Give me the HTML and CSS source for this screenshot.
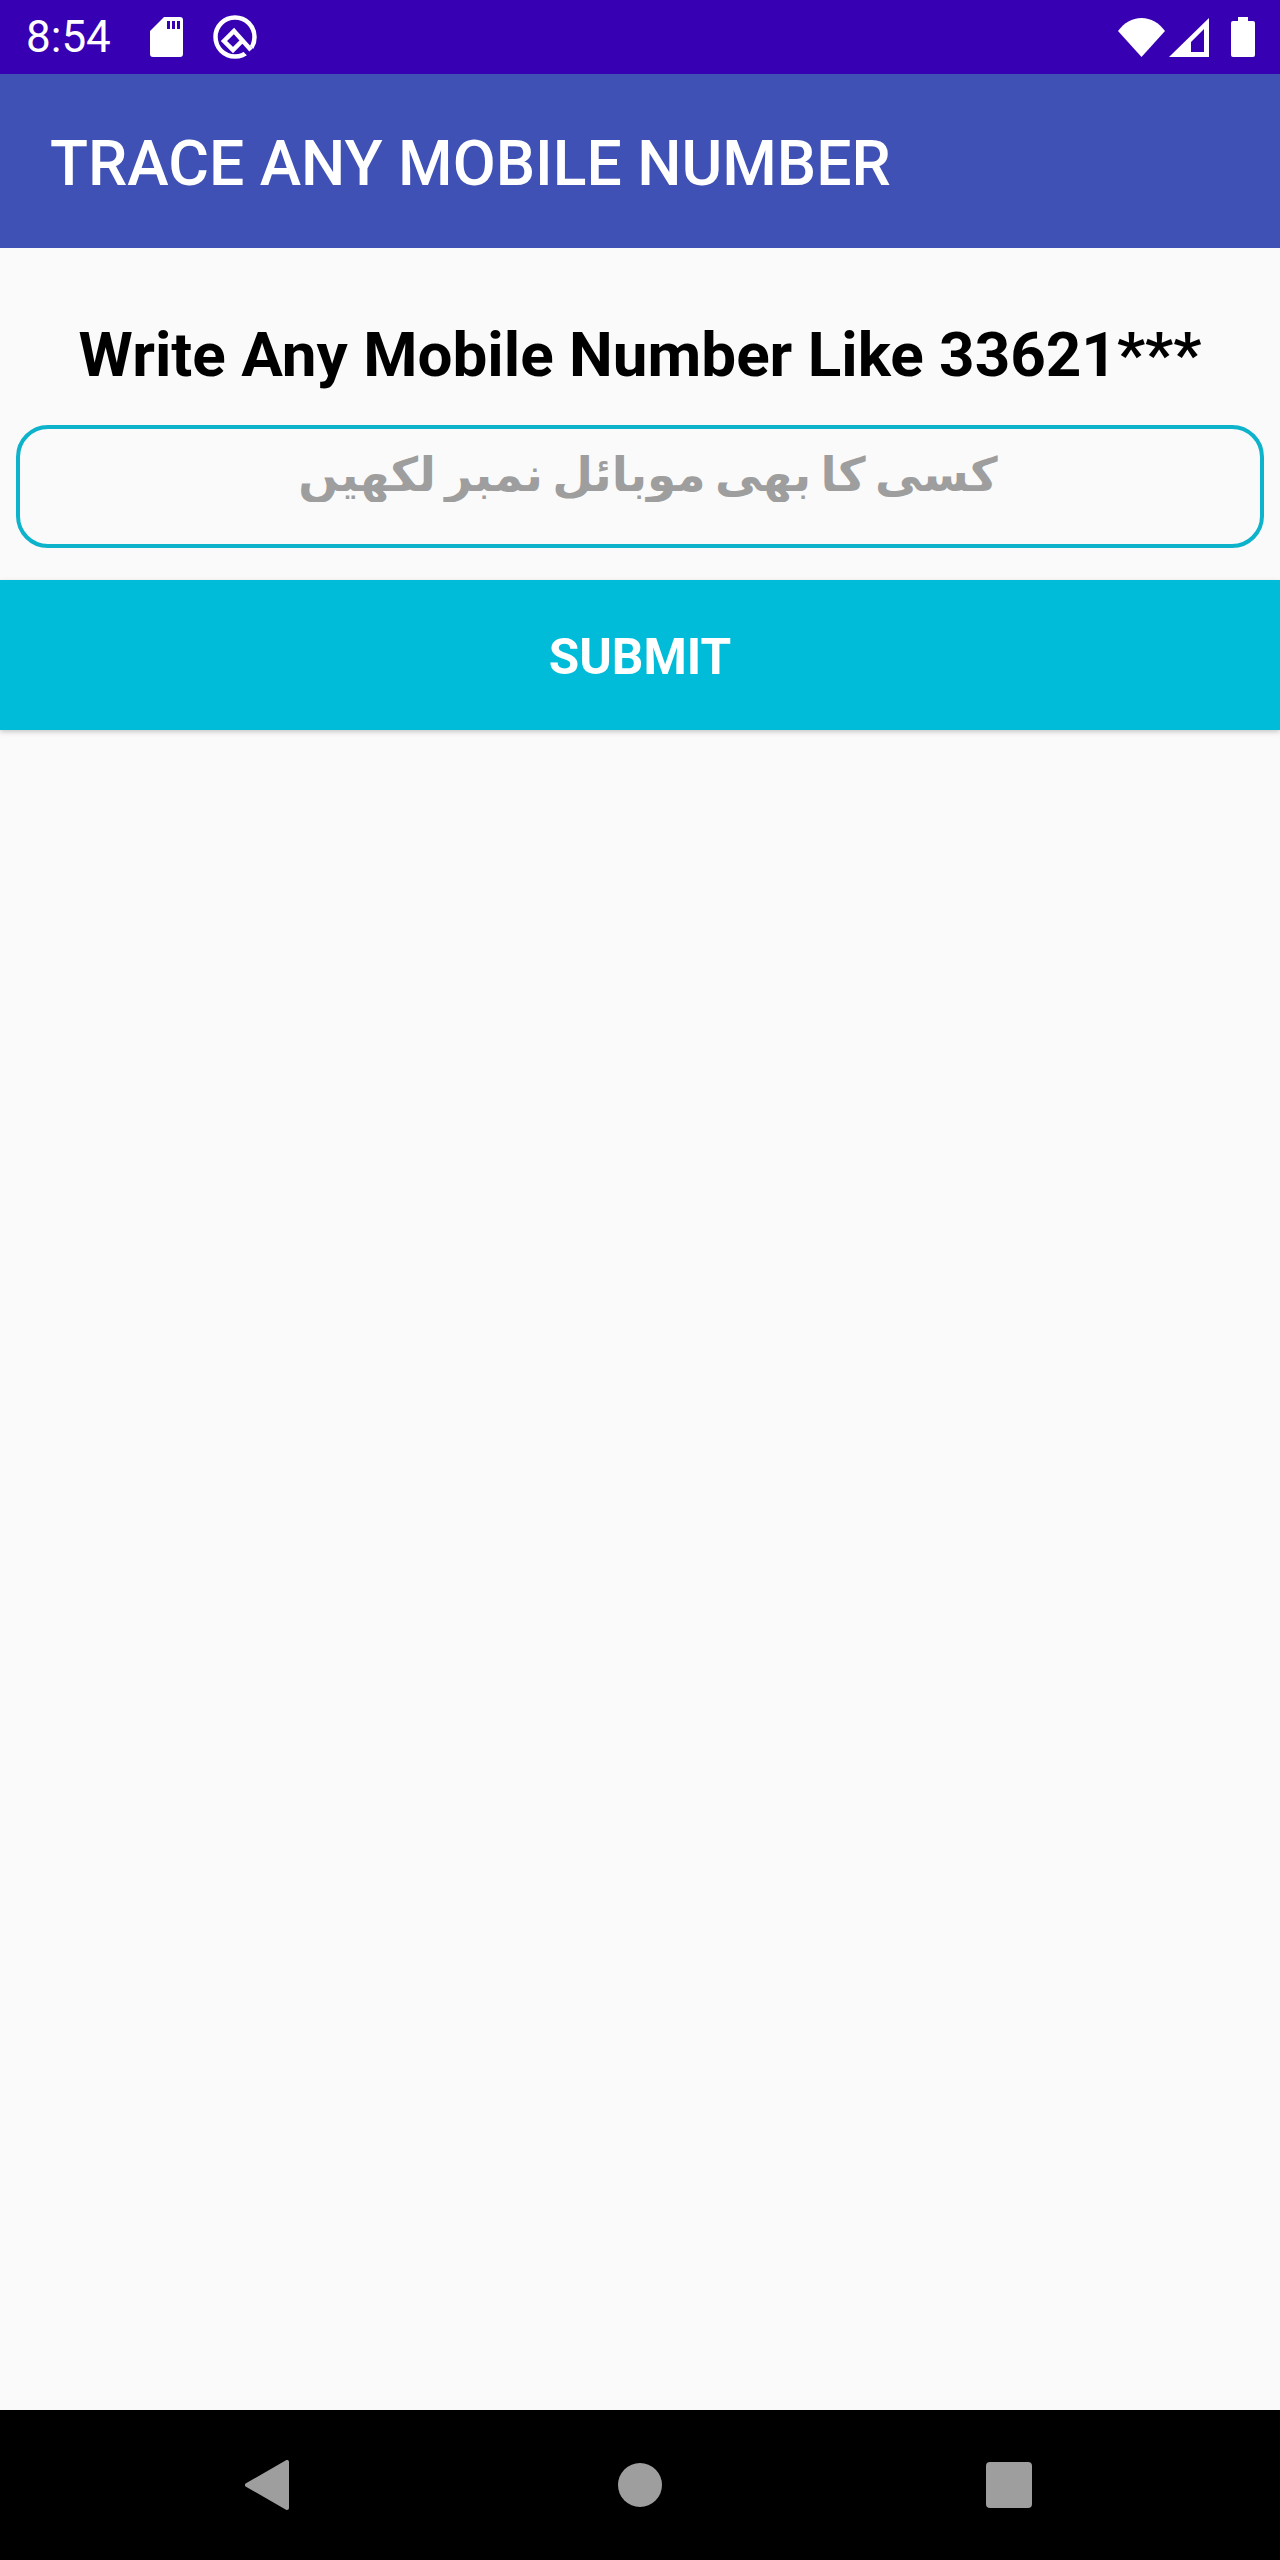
FILE: index.html
```html
<!DOCTYPE html>
<html lang="en">
<head>
    <meta charset="UTF-8">
    <meta name="viewport" content="width=device-width, initial-scale=1.0">
    <title>Trace Any Mobile Number</title>
    <link rel="stylesheet" href="styles.css">
</head>
<body>
    <div class="status-bar">
        <span class="status-time">8:54</span>
        <svg class="icon-sd" width="33" height="40" viewBox="0 0 33 40">
            <path fill-rule="evenodd" fill="#fff" d="M14 0H30a3 3 0 0 1 3 3V37a3 3 0 0 1-3 3H3a3 3 0 0 1-3-3V14ZM17 4V12H20V4ZM22 4V12H25V4ZM27 4V12H30V4Z"/>
        </svg>
        <svg class="icon-q" width="44" height="44" viewBox="0 0 44 44">
            <circle cx="22" cy="22" r="19.5" fill="none" stroke="#fff" stroke-width="4.5"/>
            <path fill="none" stroke="#3700b3" stroke-width="9" d="M31 31L40 40"/>
            <path fill="none" stroke="#fff" stroke-width="4.5" d="M38 35L21 16L11 26L20 35L29 26"/>
        </svg>
        <div class="status-right">
            <svg width="47" height="39" viewBox="0 0 47 39">
                <path fill="#fff" d="M0 13C6 5 14 0 23.5 0S41 5 47 13L23.5 39Z"/>
            </svg>
            <svg class="icon-signal" width="40" height="39" viewBox="0 0 40 39">
                <path fill-rule="evenodd" fill="#fff" d="M40 0V39H0ZM35 11L22 24V34H35Z"/>
            </svg>
            <svg class="icon-battery" width="24" height="40" viewBox="0 0 24 40">
                <path fill="#fff" d="M7 0H17V4H22a2 2 0 0 1 2 2V38a2 2 0 0 1-2 2H2a2 2 0 0 1-2-2V6a2 2 0 0 1 2-2H7Z"/>
            </svg>
        </div>
    </div>

    <div class="app-bar">TRACE ANY MOBILE NUMBER</div>

    <div class="content">
        <h1>Write Any Mobile Number Like 33621***</h1>
        <input class="number-input" type="text" placeholder="کسی کا بھی موبائل نمبر لکھیں" dir="rtl">
        <button class="submit-btn" type="button">SUBMIT</button>
    </div>

    <div class="nav-bar">
        <svg width="44" height="50" viewBox="0 0 44 50">
            <path fill="#9e9e9e" stroke="#9e9e9e" stroke-width="4" stroke-linejoin="round" d="M42 2V48L2 25Z"/>
        </svg>
        <svg class="nav-home" width="44" height="44" viewBox="0 0 44 44">
            <circle cx="22" cy="22" r="22" fill="#9e9e9e"/>
        </svg>
        <svg width="46" height="46" viewBox="0 0 46 46">
            <rect width="46" height="46" rx="4" fill="#9e9e9e"/>
        </svg>
    </div>
</body>
</html>
```

FILE: styles.css
```css
html, body {
    height: 100%;
}
body {
    margin: 0;
    display: flex;
    flex-direction: column;
    font-family: Roboto, sans-serif;
    background-color: #fafafa;
}
.status-bar {
    height: 74px;
    flex-shrink: 0;
    display: flex;
    align-items: center;
    padding: 0 25px 0 26px;
    background-color: #3700b3;
    color: #fff;
}
.status-time {
    font-size: 44px;
    width: 124px;
}
.icon-q {
    margin-left: 30px;
}
.status-right {
    margin-left: auto;
    display: flex;
    align-items: center;
}
.icon-signal {
    margin-left: 4px;
}
.icon-battery {
    margin-left: 22px;
}
.app-bar {
    height: 174px;
    flex-shrink: 0;
    display: flex;
    align-items: center;
    box-sizing: border-box;
    padding: 4px 0 0 50px;
    background-color: #3f51b5;
    color: #fff;
    font-size: 62.4px;
    font-weight: 500;
}
.content {
    flex: 1;
    display: flex;
    flex-direction: column;
    align-items: center;
}
h1 {
    margin: 72px 0 0;
    height: 105px;
    font-size: 62px;
    line-height: 70px;
    font-weight: 700;
    color: #000;
}
.number-input {
    box-sizing: border-box;
    width: 1248px;
    height: 123px;
    padding: 0 12px 24px 28px;
    border: 4px solid #0db2cb;
    border-radius: 32px;
    background: transparent;
    font-family: "DejaVu Sans", sans-serif;
    font-size: 47px;
    font-weight: 700;
    word-spacing: -7px;
    text-align: center;
}
.number-input::placeholder {
    color: #9e9e9e;
    opacity: 1;
}
.submit-btn {
    width: 100%;
    height: 150px;
    margin-top: 32px;
    padding: 4px 0 0;
    border: none;
    background-color: #00bcd8;
    color: #fff;
    font-family: Roboto, sans-serif;
    font-size: 49.5px;
    font-weight: 700;
    box-shadow: 0 2px 5px rgba(0, 0, 0, 0.2);
}
.nav-bar {
    height: 150px;
    flex-shrink: 0;
    display: flex;
    align-items: center;
    padding-left: 245px;
    background-color: #000;
}
.nav-home {
    margin: 0 324px 0 329px;
}
```
